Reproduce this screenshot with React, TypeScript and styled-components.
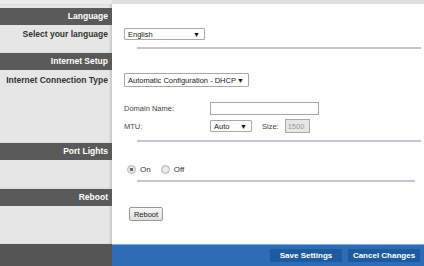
import React from 'react';
import styled, {createGlobalStyle} from "styled-components";

const GlobalStyle = createGlobalStyle`
    html, body {
        margin: 0;
        padding: 0;
        background: #e6e6e6;
        font-family: 'Liberation Sans', Arial, sans-serif;
    }
`

export default function App() {
    return (
        <Page>
            <GlobalStyle/>
            <TopBand/>
            <Main>
                <Section $height={49}>
                    <Side $top={4}>
                        <Header>Language</Header>
                        <SideLabel $top={4}>Select your language</SideLabel>
                    </Side>
                    <Body $top={24}>
                        <Dropdown $width={81}>English<Arrow>▼</Arrow></Dropdown>
                        <Separator $top={7}/>
                    </Body>
                </Section>

                <Section $height={90}>
                    <Side>
                        <Header>Internet Setup</Header>
                        <SideLabel $top={5}>Internet Connection Type</SideLabel>
                    </Side>
                    <Body $top={20}>
                        <Dropdown $width={125} $height={14}>Automatic Configuration - DHCP<Arrow>▼</Arrow></Dropdown>
                        <FieldRow $top={15}>
                            <FieldLabel>Domain Name:</FieldLabel>
                            <TextInput $width={109}/>
                        </FieldRow>
                        <FieldRow $top={4}>
                            <FieldLabel>MTU:</FieldLabel>
                            <Dropdown $width={42}>Auto<Arrow>▼</Arrow></Dropdown>
                            <SizeLabel>Size:</SizeLabel>
                            <TextInput $width={25} $height={14} $disabled>1500</TextInput>
                        </FieldRow>
                        <Separator $top={7}/>
                    </Body>
                </Section>

                <Section $height={45}>
                    <Side>
                        <Header>Port Lights</Header>
                    </Side>
                    <Body $top={22}>
                        <RadioRow>
                            <RadioOption><Radio $checked/>On</RadioOption>
                            <RadioOption><Radio/>Off</RadioOption>
                        </RadioRow>
                        <Separator $top={6} $right={9}/>
                    </Body>
                </Section>

                <Section $height={56}>
                    <Side $top={1}>
                        <Header>Reboot</Header>
                    </Side>
                    <Body $top={19}>
                        <GrayButton>Reboot</GrayButton>
                    </Body>
                </Section>
            </Main>
            <Footer>
                <FooterSide/>
                <FooterBar>
                    <BlueButton>Save Settings</BlueButton>
                    <BlueButton>Cancel Changes</BlueButton>
                </FooterBar>
            </Footer>
        </Page>
    );
}

const Page = styled.div`
    width: 424px;
    height: 266px;
    display: flex;
    flex-direction: column;
    overflow: hidden;
    background: #e6e6e6;
`
const TopBand = styled.div`
    height: 4px;
    background: linear-gradient(to right, #ececec 112px, #dedede 112px);
`
const Main = styled.div`
    flex: 1;
    display: flex;
    flex-direction: column;
`
const Section = styled.div<{ $height: number }>`
    display: grid;
    grid-template-columns: 112px 1fr;
    height: ${p => p.$height}px;
`
const Side = styled.div<{ $top?: number }>`
    background: #e6e6e6;
    padding-top: ${p => p.$top || 0}px;
    box-shadow: inset -2px 0 2px rgba(0, 0, 0, 0.12);
`
const Header = styled.div`
    height: 17px;
    line-height: 17px;
    background: #5a5a5a;
    color: #fff;
    font-weight: 700;
    font-size: 8.5px;
    text-align: right;
    padding-right: 4px;
`
const SideLabel = styled.div<{ $top: number }>`
    margin-top: ${p => p.$top}px;
    font-size: 8.5px;
    font-weight: 700;
    color: #333;
    text-align: right;
    padding-right: 4px;
`
const Body = styled.div<{ $top: number }>`
    background: #fff;
    padding: ${p => p.$top}px 0 0 12px;
    color: #444;
    font-size: 7.5px;
`
const Dropdown = styled.div<{ $width: number, $height?: number }>`
    box-sizing: border-box;
    width: ${p => p.$width}px;
    height: ${p => p.$height || 12}px;
    border: 1px solid #a9a9a9;
    border-radius: 1px;
    display: flex;
    align-items: center;
    justify-content: space-between;
    padding: 0 4px 0 3px;
    color: #222;
    font-size: 7.5px;
    background: #fff;
`
const Arrow = styled.span`
    font-size: 7px;
    color: #111;
`
const Separator = styled.div<{ $top: number, $right?: number }>`
    height: 2px;
    background: #c6c3e0;
    margin: ${p => p.$top}px ${p => p.$right || 3}px 0 13px;
`
const FieldRow = styled.div<{ $top: number }>`
    display: flex;
    align-items: center;
    margin-top: ${p => p.$top}px;
`
const FieldLabel = styled.span`
    width: 86px;
    color: #444;
`
const SizeLabel = styled.span`
    margin: 0 6px 0 10px;
    color: #444;
`
const TextInput = styled.div<{ $width: number, $height?: number, $disabled?: boolean }>`
    box-sizing: border-box;
    width: ${p => p.$width}px;
    height: ${p => p.$height || 13}px;
    border: 1px solid #a9a9a9;
    background: ${p => p.$disabled ? '#e6e6e6' : '#fff'};
    color: #9a9a9a;
    padding-left: 2px;
    display: flex;
    align-items: center;
    font-size: 7.5px;
`
const RadioRow = styled.div`
    display: flex;
    gap: 10px;
    padding-left: 3px;
    font-size: 8px;
    color: #333;
`
const RadioOption = styled.label`
    display: flex;
    align-items: center;
    gap: 4px;
`
const Radio = styled.span<{ $checked?: boolean }>`
    box-sizing: border-box;
    width: 9px;
    height: 9px;
    border-radius: 50%;
    border: 1px solid #b5b5b5;
    background: radial-gradient(circle, ${p => p.$checked ? '#6a6a6a 0 1.6px, #e8e8e8 2px' : '#f2f2f2 0, #dcdcdc 100%'});
`
const GrayButton = styled.div`
    box-sizing: border-box;
    width: 34px;
    height: 14px;
    margin-left: 5px;
    border: 1px solid #9a9a9a;
    border-radius: 2px;
    background: linear-gradient(#f6f6f6, #dedede);
    color: #222;
    font-size: 7.5px;
    display: flex;
    align-items: center;
    justify-content: center;
`
const Footer = styled.div`
    height: 22px;
    display: grid;
    grid-template-columns: 112px 1fr;
`
const FooterSide = styled.div`
    background: #555555;
`
const FooterBar = styled.div`
    background: #2d6db5;
    border-top: 1px solid #7fb2e6;
    display: flex;
    justify-content: flex-end;
    align-items: center;
    gap: 6px;
    padding-right: 4px;
`
const BlueButton = styled.div`
    height: 13px;
    width: 72px;
    background: #1f5a9e;
    color: #fff;
    font-size: 8px;
    font-weight: 700;
    display: flex;
    align-items: center;
    justify-content: center;
`
